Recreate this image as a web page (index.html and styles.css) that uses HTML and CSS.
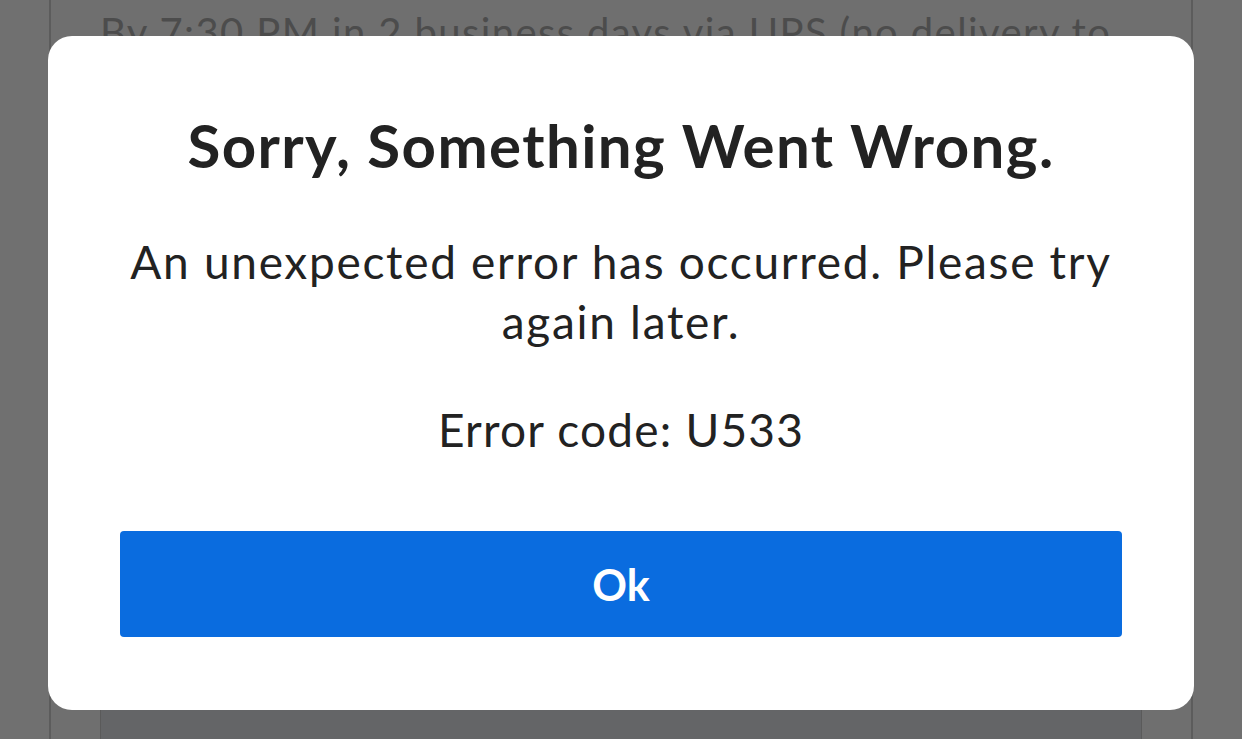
FILE: index.html
```html
<!DOCTYPE html>
<html lang="en">
<head>
<meta charset="utf-8">
<title>Error</title>
<link rel="stylesheet" href="styles.css">
</head>
<body>
<div class="page">
  <div class="panel">
    <p class="note">By 7:30 PM in 2 business days via UPS (no delivery to</p>
    <div class="spacer"></div>
    <div class="card"></div>
  </div>
</div>
<div class="overlay">
  <div class="modal" role="dialog">
    <h1 class="title">Sorry, Something Went Wrong.</h1>
    <p class="message">An unexpected error has occurred. Please try again later.</p>
    <p class="code">Error code: U533</p>
    <button class="ok">Ok</button>
  </div>
</div>
</body>
</html>
```
FILE: styles.css
```css
html, body {
  margin: 0;
  padding: 0;
  height: 100%;
}
body {
  background: #707070;
  font-family: Lato, "Liberation Sans", sans-serif;
  overflow: hidden;
}
.page {
  height: 739px;
  padding: 0 49px;
  box-sizing: border-box;
}
.panel {
  height: 100%;
  border-left: 2px solid #5c5c5c;
  border-right: 2px solid #5c5c5c;
  background: #6f6f6f;
  display: flex;
  flex-direction: column;
  padding: 0 49px 0 49px;
}
.note {
  margin: 8px 0 0 0;
  font-size: 40px;
  line-height: 48px;
  letter-spacing: 1.4px;
  color: #4c4c4c;
  white-space: nowrap;
}
.spacer {
  flex: 1;
}
.card {
  height: 30px;
  background: #646567;
  border-left: 1px solid #5a5a5a;
  border-right: 1px solid #5a5a5a;
}
.overlay {
  position: fixed;
  inset: 0;
}
.modal {
  position: absolute;
  left: 48px;
  top: 36px;
  width: 1146px;
  height: 674px;
  box-sizing: border-box;
  background: #ffffff;
  border-radius: 24px;
  padding: 79px 72px 0 72px;
  display: flex;
  flex-direction: column;
  align-items: center;
  text-align: center;
  color: #222222;
}
.title {
  margin: 0;
  font-size: 60px;
  line-height: 60px;
  font-weight: 700;
  letter-spacing: 1.4px;
}
.message {
  margin: 57px 0 0 0;
  font-size: 46px;
  line-height: 60px;
  font-weight: 400;
  letter-spacing: 1.7px;
}
.code {
  margin: 48px 0 0 0;
  font-size: 46px;
  line-height: 60px;
  font-weight: 400;
  letter-spacing: 1.2px;
}
.ok {
  margin-top: 71px;
  width: 1002px;
  height: 106px;
  border: 0;
  border-radius: 4px;
  background: #0a6cdf;
  color: #ffffff;
  font-family: Lato, "Liberation Sans", sans-serif;
  font-size: 43px;
  font-weight: 700;
}
```
